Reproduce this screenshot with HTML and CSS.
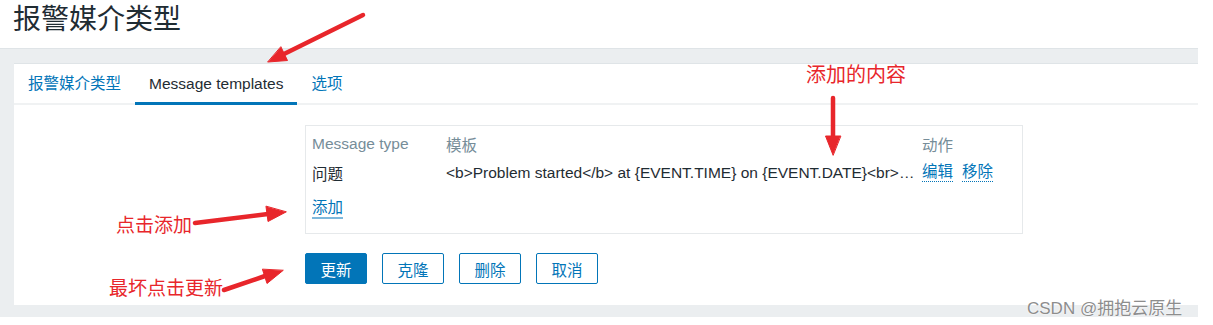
FILE: index.html
```html
<!DOCTYPE html>
<html lang="zh-CN">
<head>
<meta charset="utf-8">
<title>报警媒介类型</title>
<link rel="stylesheet" href="styles.css">
</head>
<body>
<header class="page-head"><h1 class="page-title">报警媒介类型</h1></header>
<main class="wrap">
  <section class="panel">
    <nav class="tabs">
      <a class="tab">报警媒介类型</a>
      <a class="tab tab-active">Message templates</a>
      <a class="tab">选项</a>
    </nav>
    <div class="form">
      <div class="tpl-box">
        <div class="tpl-row tpl-head">
          <div class="c-type">Message type</div>
          <div class="c-tpl">模板</div>
          <div class="c-act">动作</div>
        </div>
        <div class="tpl-row">
          <div class="c-type">问题</div>
          <div class="c-tpl">&lt;b&gt;Problem started&lt;/b&gt; at {EVENT.TIME} on {EVENT.DATE}&lt;br&gt;…</div>
          <div class="c-act"><a class="link-dot">编辑</a><a class="link-dot">移除</a></div>
        </div>
        <div class="tpl-add"><a class="link-add">添加</a></div>
      </div>
      <div class="btns">
        <button class="btn btn-main">更新</button>
        <button class="btn">克隆</button>
        <button class="btn">删除</button>
        <button class="btn">取消</button>
      </div>
    </div>
  </section>
</main>

<svg class="arrows" width="1213" height="325" viewBox="0 0 1213 325">
  <g fill="#e8262b" stroke="#e8262b" stroke-linecap="round">
    <line x1="363" y1="15" x2="284" y2="54" stroke-width="4.5"/>
    <polygon points="268,62 287.5,60.5 281,47" stroke-width="1"/>
    <line x1="833" y1="98" x2="833" y2="137" stroke-width="4.5"/>
    <polygon points="833,155 825.5,136 840.5,136" stroke-width="1"/>
    <line x1="195" y1="223" x2="268" y2="214" stroke-width="4.5"/>
    <polygon points="286,212 268,221.5 266,206.5" stroke-width="1"/>
    <line x1="224" y1="290" x2="265" y2="276" stroke-width="4.5"/>
    <polygon points="283,270.5 267,283.5 262.5,269.5" stroke-width="1"/>
  </g>
</svg>
<div class="note note-content">添加的内容</div>
<div class="note note-add">点击添加</div>
<div class="note note-update">最坏点击更新</div>
<div class="watermark">CSDN @拥抱云原生</div>
</body>
</html>
```

FILE: styles.css
```css
* { box-sizing: border-box; }
body {
  margin: 0;
  position: relative;
  width: 1213px;
  height: 325px;
  overflow: hidden;
  background: #ffffff;
  font-family: "Liberation Sans", "Noto Sans CJK SC", sans-serif;
  font-size: 15.5px;
  color: #1f2c33;
}
.page-head {
  height: 48px;
  padding-left: 13px;
}
.page-title {
  margin: 0;
  font-size: 28px;
  font-weight: normal;
  line-height: 40px;
  color: #1f2c33;
}
.wrap {
  width: 1198px;
  background: #ebeef0;
  border-top: 1px solid #dfe4e7;
  padding: 14px 0 12px 14px;
}
.panel {
  background: #ffffff;
  border-top: 1px solid #dfe4e7;
}
.tabs {
  display: flex;
  height: 41px;
  border-bottom: 2px solid #f0f2f3;
}
.tab {
  position: relative;
  padding: 0 14px;
  line-height: 40px;
  color: #0275b8;
  white-space: nowrap;
}
.tab-active { color: #1f2c33; }
.tab-active::after {
  content: "";
  position: absolute;
  left: 0;
  right: 0;
  bottom: -2px;
  height: 3px;
  background: #0275b8;
}
.form {
  padding: 20px 0 21px 291px;
}
.tpl-box {
  width: 718px;
  border: 1px solid #e6e9eb;
  padding: 3px 6px 9px 6px;
}
.tpl-row {
  display: flex;
  height: 29px;
  align-items: center;
  white-space: nowrap;
}
.tpl-head { color: #768d99; }
.c-type { width: 134px; }
.c-tpl { width: 476px; overflow: hidden; }
.c-act { display: flex; gap: 9px; }
.link-dot {
  color: #0275b8;
  border-bottom: 1px dotted #0275b8;
  line-height: 18px;
}
.tpl-add {
  height: 37px;
  display: flex;
  align-items: center;
  padding-top: 6px;
}
.link-add {
  color: #0275b8;
  line-height: 19px;
  border-bottom: 2px solid #7db8dc;
}
.btns {
  display: flex;
  gap: 15px;
  margin-top: 19px;
}
.btn {
  width: 62px;
  height: 31px;
  padding: 0;
  border: 1px solid #0275b8;
  border-radius: 2px;
  background: #ffffff;
  color: #0275b8;
  font-family: "Liberation Sans", "Noto Sans CJK SC", sans-serif;
  font-size: 15.5px;
}
.btn-main {
  background: #0275b8;
  color: #ffffff;
}
.arrows {
  position: absolute;
  left: 0;
  top: 0;
  pointer-events: none;
}
.note {
  position: absolute;
  color: #e8262b;
  font-family: "Noto Sans CJK SC", sans-serif;
  font-size: 19px;
  line-height: 22px;
  white-space: nowrap;
}
.note-content { left: 806px; top: 63px; font-size: 20px; }
.note-add { left: 116px; top: 213px; }
.note-update { left: 109px; top: 276px; }
.watermark {
  position: absolute;
  left: 1027px;
  top: 298px;
  font-size: 17px;
  line-height: 22px;
  color: #8d8d8d;
  text-shadow: 0 0 2px #ffffff, 0 0 1px #ffffff;
  white-space: nowrap;
}
```
